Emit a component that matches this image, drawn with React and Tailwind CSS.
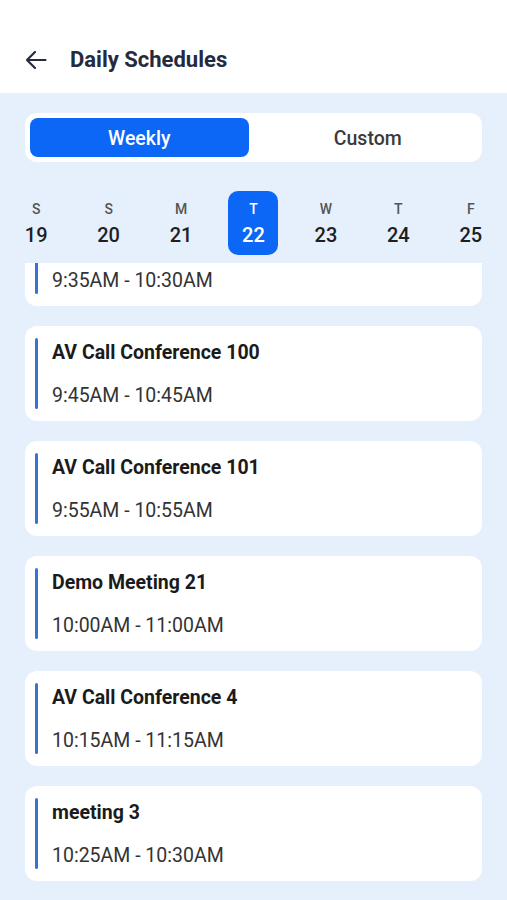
const days = [
  { d: "S", n: 19 },
  { d: "S", n: 20 },
  { d: "M", n: 21 },
  { d: "T", n: 22, active: true },
  { d: "W", n: 23 },
  { d: "T", n: 24 },
  { d: "F", n: 25 },
];

const meetings = [
  { title: "Demo Meeting 20", time: "9:35AM - 10:30AM" },
  { title: "AV Call Conference 100", time: "9:45AM - 10:45AM" },
  { title: "AV Call Conference 101", time: "9:55AM - 10:55AM" },
  { title: "Demo Meeting 21", time: "10:00AM - 11:00AM" },
  { title: "AV Call Conference 4", time: "10:15AM - 11:15AM" },
  { title: "meeting 3", time: "10:25AM - 10:30AM" },
];

const MeetingCard = ({ title, time }) => (
  <div className="flex h-[95px] shrink-0 rounded-xl bg-white py-3 pl-[10px]">
    <div className="w-[3px] rounded-full bg-[#3a72d0]" />
    <div className="flex flex-col pt-px pl-[14px]">
      <p className="text-[19.5px] leading-7 font-bold text-[#1b1b1b]">{title}</p>
      <p className="mt-[15px] text-[19.5px] leading-7 text-[#333333]">{time}</p>
    </div>
  </div>
);

export default function App() {
  return (
    <div
      className="flex h-[900px] flex-col overflow-hidden bg-[#e6effc]"
      style={{ fontFamily: "Roboto, 'Noto Sans', sans-serif" }}
    >
      <header className="flex h-[93px] shrink-0 items-end bg-white pb-[19px] pl-[25px]">
        <div className="flex items-center">
          <svg width="22" height="20" viewBox="0 0 22 20" fill="none">
            <path
              d="M20.5 10H2M10 2 2 10l8 8"
              stroke="#252a3f"
              strokeWidth="2.2"
              strokeLinecap="round"
              strokeLinejoin="round"
            />
          </svg>
          <h1 className="ml-[23px] text-[22px] leading-7 font-bold text-[#252a3f]">
            Daily Schedules
          </h1>
        </div>
      </header>

      <div className="px-[25px] pt-5">
        <div className="grid h-[49px] grid-cols-2 gap-2.5 rounded-xl bg-white p-[5px]">
          <button className="rounded-lg bg-[#0c66f6] pt-0.5 text-[19.5px] font-medium text-white">
            Weekly
          </button>
          <button className="rounded-lg pt-0.5 text-[19.5px] font-medium text-[#3a3a3a]">
            Custom
          </button>
        </div>
      </div>

      <div className="mt-[29px] grid grid-cols-7">
        {days.map((day, i) => (
          <div key={i} className="flex justify-center">
            <div
              className={
                day.active
                  ? "flex h-16 w-[50px] flex-col items-center rounded-[10px] bg-[#0c66f6] pt-[10px] text-white"
                  : "flex h-16 w-[50px] flex-col items-center pt-[10px]"
              }
            >
              <span
                className={
                  day.active
                    ? "text-[14px] leading-4 font-medium"
                    : "text-[14px] leading-4 font-medium text-[#555555]"
                }
              >
                {day.d}
              </span>
              <span
                className={
                  day.active
                    ? "mt-[6px] text-[20px] leading-6 font-medium"
                    : "mt-[6px] text-[20px] leading-6 font-medium text-[#1f1f1f]"
                }
              >
                {day.n}
              </span>
            </div>
          </div>
        ))}
      </div>

      <div className="mt-2 flex-1 overflow-hidden">
        <div className="-mt-[52px] flex flex-col gap-5 px-[25px]">
          {meetings.map((m, i) => (
            <MeetingCard key={i} title={m.title} time={m.time} />
          ))}
        </div>
      </div>
    </div>
  );
}
